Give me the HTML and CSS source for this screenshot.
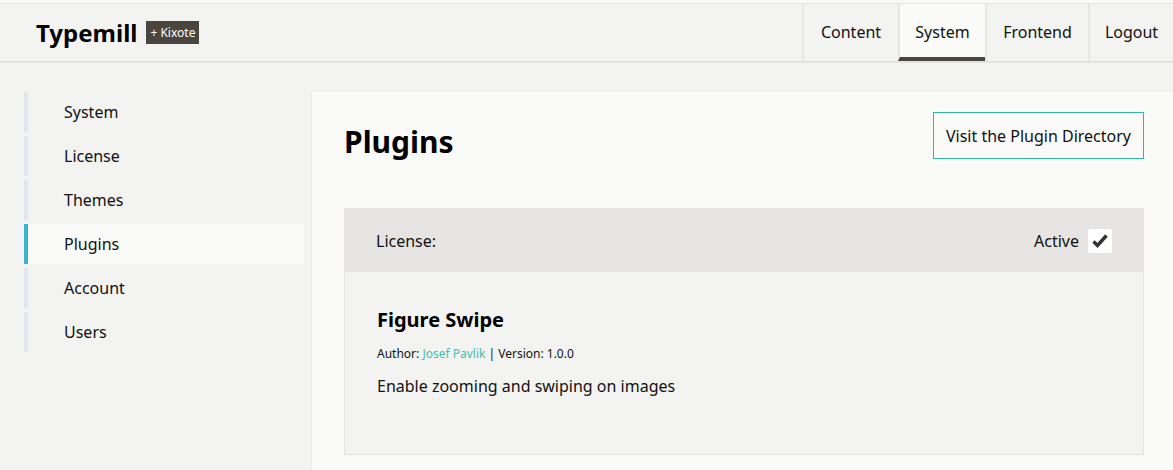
FILE: index.html
```html
<!DOCTYPE html>
<html>
<head>
<meta charset="utf-8">
<link rel="stylesheet" href="styles.css">
</head>
<body>
<header class="topbar">
  <div class="brand">
    <span class="logo">Typemill</span>
    <span class="badge">+ Kixote</span>
  </div>
  <nav class="mainnav">
    <a class="navitem">Content</a>
    <a class="navitem active">System</a>
    <a class="navitem">Frontend</a>
    <a class="navitem">Logout</a>
  </nav>
</header>
<div class="layout">
  <aside class="sidebar">
    <a class="sideitem">System</a>
    <a class="sideitem">License</a>
    <a class="sideitem">Themes</a>
    <a class="sideitem active">Plugins</a>
    <a class="sideitem">Account</a>
    <a class="sideitem">Users</a>
  </aside>
  <main class="content">
    <div class="titlerow">
      <h1 class="title">Plugins</h1>
      <a class="dirbtn">Visit the Plugin Directory</a>
    </div>
    <section class="card">
      <div class="cardhead">
        <span>License:</span>
        <label class="active-toggle">Active <span class="checkbox"><svg width="16" height="14" viewBox="0 0 16 14"><path d="M1.5 7.5 L5.5 11.5 L14.5 1.5" fill="none" stroke="#333" stroke-width="3.4" stroke-linejoin="miter"/></svg></span></label>
      </div>
      <div class="cardbody">
        <h2 class="pname">Figure Swipe</h2>
        <p class="meta">Author: <a class="author">Josef Pavlik</a> | Version: 1.0.0</p>
        <p class="desc">Enable zooming and swiping on images</p>
      </div>
    </section>
  </main>
</div>
</body>
</html>
```
FILE: styles.css
```css
* { box-sizing: border-box; }
html, body { margin: 0; padding: 0; }
body {
  font-family: "Noto Sans", "Open Sans", sans-serif;
  background: #f3f3f1;
  color: #111;
  padding-top: 3px;
  background-image: linear-gradient(#f9f9f8, #f9f9f8);
  background-repeat: no-repeat;
  background-size: 100% 3px;
}
.topbar {
  display: flex;
  justify-content: space-between;
  align-items: stretch;
  height: 60px;
  border-top: 1px solid #e3e3e1;
  border-bottom: 2px solid #e3e3e1;
  background: #f3f3f1;
}
.brand {
  display: flex;
  align-items: center;
  padding-left: 36px;
  gap: 9px;
}
.logo {
  font-weight: 700;
  font-size: 24px;
  color: #000;
}
.badge {
  background: #4a453f;
  color: #fff;
  font-size: 12px;
  padding: 3px 4px;
  line-height: 17px;
}
.mainnav { display: flex; }
.navitem {
  display: flex;
  align-items: center;
  justify-content: center;
  border-left: 2px solid #e6e6e4;
  font-size: 16px;
  color: #111;
  padding: 0 16px 2px;
  height: 57px;
}
.navitem:nth-child(1) { width: 96px; }
.navitem:nth-child(2) { width: 87px; }
.navitem:nth-child(3) { width: 103px; }
.navitem:nth-child(4) { width: 85px; }
.navitem.active {
  background: #fafaf9;
  border-bottom: 4px solid #4a453f;
  padding-top: 2px;
  padding-bottom: 0;
}
.layout {
  display: flex;
  padding-top: 29px;
}
.sidebar {
  width: 304px;
  padding-left: 24px;
  display: flex;
  flex-direction: column;
  gap: 4px;
  flex-shrink: 0;
}
.sideitem {
  display: flex;
  align-items: center;
  height: 40px;
  border-left: 4px solid #e1e5ee;
  padding-left: 36px;
  font-size: 16px;
  color: #111;
}
.sideitem.active {
  border-left-color: #3ab4cc;
  background: #fafaf9;
}
.content {
  flex: 1;
  margin-left: 8px;
  background: #fafaf9;
  box-shadow: -1px 0 2px rgba(0,0,0,0.04);
  padding: 20px 29px 16px 32px;
  min-height: 400px;
}
.titlerow {
  display: flex;
  justify-content: space-between;
  align-items: flex-start;
  height: 96px;
}
.title {
  margin: 0;
  padding-top: 12px;
  font-size: 30px;
  font-weight: 700;
  color: #000;
  line-height: 36px;
}
.dirbtn {
  display: flex;
  align-items: center;
  height: 47px;
  padding: 0 12px;
  border: 1px solid #2fb5a5;
  font-size: 16px;
  color: #111;
  background: #fafaf9;
}
.card {
  border: 1px solid #e3e3e1;
  border-top: none;
}
.cardhead {
  display: flex;
  justify-content: space-between;
  align-items: center;
  height: 64px;
  background: #e6e5e3;
  margin: 0 -1px;
  padding: 2px 32px 0;
  font-size: 16px;
}
.active-toggle {
  display: flex;
  align-items: center;
  gap: 9px;
}
.checkbox {
  width: 24px;
  height: 24px;
  background: #fff;
  border-radius: 2px;
  display: flex;
  align-items: center;
  justify-content: center;
}
.cardbody {
  background: #f3f3f1;
  padding: 34px 32px 30px 32px;
  height: 182px;
}
.pname {
  margin: 0;
  font-size: 20px;
  font-weight: 700;
  color: #000;
  line-height: 28px;
}
.meta {
  margin: 11px 0 0;
  font-size: 12px;
  line-height: 18px;
}
.author { color: #45bfae; }
.desc {
  margin: 12px 0 0;
  font-size: 16px;
  line-height: 22px;
}
```
